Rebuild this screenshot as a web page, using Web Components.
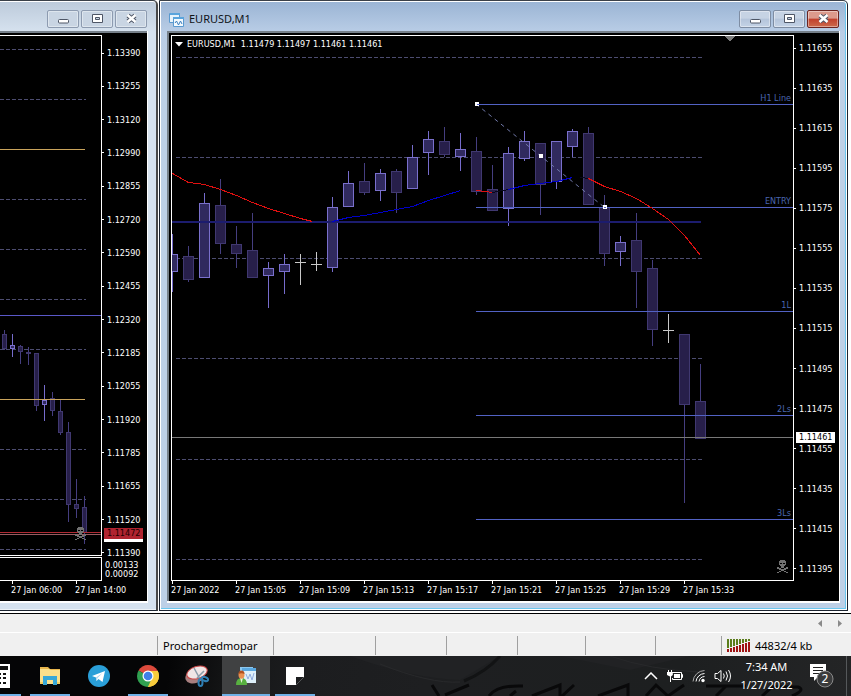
<!DOCTYPE html>
<html lang="en">
<head>
<meta charset="utf-8">
<title>EURUSD,M1</title>
<style>
  html, body { margin: 0; height: 100%; }
  body { background: #f0f0f0; overflow: hidden; font-family: "Noto Sans", "Open Sans", sans-serif; }
</style>
</head>
<body>
<trading-desktop></trading-desktop>

<script>
const CHART_FONT = '9px "DejaVu Sans Condensed", "DejaVu Sans", sans-serif';

function define(name, html, setup) {
  const template = document.createElement('template');
  template.innerHTML = html;
  customElements.define(name, class extends HTMLElement {
    constructor() {
      super();
      this.attachShadow({ mode: 'open' }).append(template.content.cloneNode(true));
    }
    connectedCallback() { if (setup) setup.call(this, this.shadowRoot); }
  });
}

/* Candles: x, high, body top, body bottom, low, kind (u = up, d = down, j = doji) */
const CHARTS = {
  m1: {
    box: [172, 36, 621, 544], half: 5,
    dashes: { from: 176, to: 702, ys: [57, 157, 258, 358, 459, 559] },
    candles: [
      [172,234,254,271,291,'u'],[188,246,256,279,281,'d'],[204,193,203,277,277,'u'],[220,179,205,243,253,'d'],
      [236,226,244,253,267,'d'],[252,213,250,277,277,'d'],[268,262,268,275,307,'u'],[284,254,264,271,293,'u'],
      [300,254,262,262,285,'j'],[316,252,264,264,271,'j'],[332,197,207,267,271,'u'],[348,171,183,206,206,'u'],
      [364,163,181,192,194,'d'],[380,169,173,190,200,'u'],[396,169,171,192,212,'d'],[412,145,157,188,188,'u'],
      [428,131,139,152,174,'u'],[444,127,141,154,156,'d'],[460,133,149,156,170,'u'],[476,137,151,191,194,'d'],
      [492,165,189,210,210,'d'],[508,147,153,208,225,'u'],[524,131,141,158,160,'u'],[540,143,143,184,214,'d'],
      [556,141,141,181,188,'u'],[572,129,131,146,156,'u'],[588,127,133,204,204,'d'],[604,195,207,253,265,'d'],
      [620,236,242,251,265,'u'],[636,213,240,271,307,'d'],[652,260,268,329,345,'d'],[668,314,330,330,343,'j'],
      [684,334,334,404,502,'d'],[700,364,401,438,438,'d']
    ],
    levels: [
      { y: 104, from: 476, to: 793, c: '#5262c4', label: 'H1 Line' },
      { y: 207, from: 476, to: 793, c: '#5262c4', label: 'ENTRY' },
      { y: 311, from: 476, to: 793, c: '#5262c4', label: '1L' },
      { y: 415, from: 476, to: 793, c: '#5262c4', label: '2Ls' },
      { y: 519, from: 476, to: 793, c: '#5262c4', label: '3Ls' },
      { y: 437, from: 172, to: 793, c: '#787878' }
    ],
    bands: [{ y: 221, from: 172, to: 701, c: '#1c1c6e' }],
    paths: [
      ['#e01010', '172,173 188,182 204,184 220,189 236,195 252,202 268,208 284,213 300,218 312,221'],
      ['#0000c8', '332,221 348,217 364,215 380,212 396,209 412,206 428,200 444,195 460,190'],
      ['#e01010', '476,190 484,191 492,192'],
      ['#08081c', '492,192 508,189'],
      ['#0000c8', '508,189 524,185 540,183 556,181 572,177'],
      ['#08081c', '580,177 588,178'],
      ['#e01010', '588,178 604,186 620,191 636,198 652,208 668,219 684,235 700,255']
    ],
    trend: [476, 104, 604, 207],
    skull: [777, 560], shift: true
  },
  h1: {
    box: [0, 36, 101, 519], half: 2,
    dashes: { from: 0, to: 86, ys: [49, 99, 199, 249, 299, 349, 449, 499, 549] },
    candles: [
      [4,330,334,348,349,'d'],[12,334,345,348,356,'u'],[20,345,346,351,363,'d'],[28,347,352,353,364,'d'],
      [36,353,353,405,410,'d'],[44,385,400,404,420,'u'],[52,392,398,410,415,'d'],[60,399,411,432,434,'d'],
      [68,422,432,504,521,'d'],[76,479,504,508,517,'d'],[84,496,507,532,543,'d']
    ],
    levels: [
      { y: 149, from: 0, to: 85, c: '#c9a45c' },
      { y: 399, from: 0, to: 85, c: '#c9a45c' },
      { y: 315, from: 0, to: 101, c: '#5a58c8' },
      { y: 532, from: 0, to: 101, c: '#b02a34' },
      { y: 534, from: 0, to: 101, c: '#9a5a60' }
    ],
    bands: [], paths: [], skull: [75, 527]
  }
};

const SKULL = `<g fill="#727272"><path d="M3 0h5v1h1v4H8v1H7v2H4V6H3V5H2V1h1z"/><path fill="#000" d="M3 3h2v1H3zM6 3h2v1H6z"/>
  <path d="M0 7h2v1h2v1h3V8h2V7h2v2H9v1H7v1h2v1h2v1H9v-1H7v-1H4v1H2v1H0v-1h2v-1h2v-1H2V9H0z"/></g>`;

define('candle-chart', `
  <style>
    :host { display: block; position: relative; overflow: hidden; background: #000; font: ${CHART_FONT}; }
    svg { display: block; position: absolute; inset: 0; width: 100%; height: 100%; }
    .level { position: absolute; right: 2px; line-height: 11px; margin-top: -11px; color: #4a66ae; }
    ::slotted(*) { position: absolute; top: 2px; left: 3px; }
  </style>
  <div id="art"></div><div id="labels"></div><slot></slot>`,
  function (root) {
    const d = CHARTS[this.getAttribute('series')];
    const [bx, by, bw, bh] = d.box;
    const rect = (x, y, w, h, c) => `<rect x="${x}" y="${y}" width="${w}" height="${h}" fill="${c}"/>`;
    let s = '';
    for (const y of d.dashes.ys)
      s += `<path d="M${d.dashes.from} ${y}.5H${d.dashes.to}" stroke="#4c4c70" stroke-dasharray="4 2"/>`;
    for (const [x, hi, top, bottom, lo, kind] of d.candles) {
      if (kind === 'j') {
        s += rect(x, hi, 1, lo - hi, '#c8c8c8') + rect(x - d.half, top, d.half * 2 + 1, 1, '#c8c8c8');
        continue;
      }
      const edge = kind === 'u' ? '#7a70cc' : '#403870';
      const fill = kind === 'u' ? '#302a5e' : '#271f4a';
      s += rect(x, hi, 1, lo - hi + 1, kind === 'u' ? '#766ccc' : '#453e80');
      s += rect(x - d.half, top, d.half * 2 + 1, bottom - top + 1, edge);
      if (bottom - top > 1) s += rect(x - d.half + 1, top + 1, d.half * 2 - 1, bottom - top - 1, fill);
    }
    for (const b of d.bands) s += rect(b.from, b.y, b.to - b.from, 2, b.c);
    for (const l of d.levels) s += rect(l.from, l.y, l.to - l.from, 1, l.c);
    for (const [c, pts] of d.paths)
      s += `<polyline points="${pts}" fill="none" stroke="${c}" transform="translate(.5 .5)"/>`;
    if (d.trend) {
      const [x1, y1, x2, y2] = d.trend;
      s += `<path d="M${x1} ${y1}L${x2} ${y2}" stroke="#7078a8" stroke-dasharray="4 4" shape-rendering="auto"/>`;
      for (const t of [0, .5, 1])
        s += rect(Math.round(x1 + (x2 - x1) * t) - 1, Math.round(y1 + (y2 - y1) * t) - 2, 4, 4, '#fff');
      s += rect(x1 + 1, y1, 2, 1, '#5262c4') + rect(x2, y2, 2, 1, '#5262c4');
    }
    if (d.shift) s += '<path d="M724 36h11l-5 5z" fill="#7c7c7c"/>';
    s += `<g transform="translate(${d.skull})">${SKULL}</g>`;
    root.getElementById('art').innerHTML =
      `<svg viewBox="${d.box.join(' ')}" preserveAspectRatio="none" shape-rendering="crispEdges" aria-hidden="true">${s}</svg>`;
    root.getElementById('labels').innerHTML = d.levels.filter(l => l.label).map(l =>
      `<span class="level" style="top:${(l.y - by) / bh * 100}%">${l.label}</span>`).join('');
  });

define('price-axis', `
  <style>
    :host { display: flex; flex-direction: column; position: relative; box-sizing: border-box; color: #fff; font: ${CHART_FONT};
            padding: 7px 0 6px; }
    ol { list-style: none; margin: 0; padding: 0; flex: 1; display: flex; flex-direction: column; justify-content: space-between; }
    li { line-height: 12px; display: flex; align-items: center; gap: 3px; white-space: nowrap; }
    li::before { content: ""; width: 2px; height: 1px; background: #fff; }
  </style>
  <ol></ol><slot></slot>`,
  function (root) {
    root.querySelector('ol').innerHTML = this.getAttribute('values').split(' ').map(v => `<li>${v}</li>`).join('');
  });

define('price-tag', `
  <style>
    :host { position: absolute; left: 2px; width: 39px; height: 11px; box-sizing: border-box; padding-left: 3px;
            background: var(--tag, #fff); color: var(--ink, #000); font: ${CHART_FONT}; line-height: 11px; }
  </style><slot></slot>`);

define('time-axis', `
  <style>
    :host { display: block; overflow: hidden; color: #fff; font: ${CHART_FONT}; }
    ol { list-style: none; margin: 0; padding: 0; display: flex; }
    li { flex: none; width: 64px; line-height: 12px; white-space: nowrap; }
    li::before { content: ""; display: block; width: 1px; height: 3px; margin-left: 1px; background: #fff; }
  </style><ol></ol>`,
  function (root) {
    root.querySelector('ol').innerHTML = this.getAttribute('values').split('|').map(v => `<li>${v}</li>`).join('');
  });

define('caption-button', `
  <style>
    :host { display: block; }
    button { display: grid; place-items: center; width: 32px; height: 18px; padding: 0; border: 1px solid #7e8da3; border-radius: 2px;
             background: linear-gradient(#c6d3e4 0 45%, #b4c4da 50%, #c4d3e6); box-shadow: inset 0 0 0 1px #ffffff66; }
    :host([tone="quiet"]) button { background: #c9d5e3; border-color: #8d9bb0; }
    :host([tone="danger"]) button { border-color: #6b2420; background: linear-gradient(#dc9a8c 0 45%, #c1402c 50%, #cc6a4c); }
    svg { display: block; }
  </style>
  <button type="button"></button>`,
  function (root) {
    const art = {
      minimize: '<rect x="2.5" y="7.5" width="10" height="3.5" rx="1" fill="#fff" stroke="#4e5666"/>',
      restore: '<path fill="#fff" fill-rule="evenodd" stroke="#4e5666" d="M2.500 2.500h10v8h-10zM5.500 5.500h4v2h-4z"/>',
      close: '<path fill="none" stroke="#4e5666" stroke-width="4.500" d="M4 3.500l7 6M11 3.500l-7 6"/><path fill="none" stroke="#fff" stroke-width="2.500" d="M3.500 3l8 7M11.500 3l-8 7"/>'
    };
    const kind = this.getAttribute('kind'), b = root.querySelector('button');
    b.setAttribute('aria-label', kind);
    b.innerHTML = `<svg width="15" height="14" viewBox="0 0 15 14" aria-hidden="true">${art[kind]}</svg>`;
  });

define('chart-window', `
  <style>
    :host { display: grid; grid-template-rows: 29px minmax(0, 1fr); box-sizing: border-box; min-width: 0;
            border: 1px solid #1c2430; border-top-color: #3a4048; box-shadow: inset 0 0 0 1px #fff, inset -1px -1px 0 1px #6cc8f0;
            padding: 1px 8px 7px;
            background: linear-gradient(#9ab4d4, #b9cde6 31px, #bdd0e7 60px); border-radius: 0 5px 0 0; }
    :host([inactive]) { border-left: 0; border-right: 2px solid #484848; padding-left: 0; box-shadow: inset 0 1px 0 #fff, inset 0 -1px 0 #eef3f8;
            background: linear-gradient(#bccada, #d6e2ef 31px); }
    header { display: flex; align-items: center; gap: 5px; padding: 5px 0 0 1px; }
    :host([inactive]) header { padding-right: 1px; }
    h2 { margin: 0; flex: 1; min-width: 0; font: 11px/18px "Noto Sans", "Open Sans", sans-serif; color: #101418; }
    nav { display: flex; gap: 2px; }
    .client { min-height: 0; box-sizing: border-box; background: #000; border: solid #fff; border-width: 0 1px 2px 0;
              box-shadow: inset 0 2px 0 #76808a, inset 2px 0 0 #76808a; padding: 4px 0 0 4px; margin: 0 -1px;
              display: grid; grid-template: minmax(0, 1fr) 20px / minmax(0, 1fr) 45px; }
    :host([inactive]) .client { padding-left: 0; margin: 0; box-shadow: inset 0 2px 0 #76808a; }
    ::slotted(time-axis) { grid-column: 1 / -1; }
  </style>
  <header><slot name="icon"></slot><h2><slot name="title"></slot></h2><nav id="nav"></nav></header>
  <section class="client"><slot></slot></section>`,
  function (root) {
    const quiet = this.hasAttribute('inactive');
    root.getElementById('nav').innerHTML = ['minimize', 'restore', 'close'].map(k =>
      `<caption-button kind="${k}" tone="${quiet ? 'quiet' : k === 'close' ? 'danger' : 'normal'}"></caption-button>`).join('');
  });

define('traffic-meter', `
  <style>:host { display: flex; align-items: center; gap: 4px; } svg { flex: none; }</style>
  <svg width="24" height="13" viewBox="0 0 24 13" shape-rendering="crispEdges" aria-hidden="true"></svg><slot></slot>`,
  function (root) {
    let s = '';
    for (let i = 0; i < 8; i++) {
      const h = 9 - i;
      s += `<path fill="#5b7d1c" d="M${i * 3} 0h2v${h}h-2z"/><path fill="#a01414" d="M${i * 3} ${h + 1}h2V13h-2z"/>`;
    }
    root.querySelector('svg').innerHTML = s;
  });

define('status-bar', `
  <style>
    :host { display: block; background: #f0f0f0; color: #000; font: 11px/18px "Noto Sans", "Open Sans", sans-serif; }
    .tabs { display: flex; justify-content: flex-end; align-items: center; gap: 14px; height: 18px; padding: 0 9px 0 0; border-bottom: 1px solid #fff; }
    .tabs button { display: block; border: 0; padding: 0; background: none; height: 7px; }
    svg { display: block; }
    .cells { display: grid; grid-template-columns: minmax(0, 1fr) 116px 102px 71px 71px 68px 70px 66px 130px; height: 23px; box-sizing: border-box; padding: 3px 0 1px; }
    .cells > div { display: flex; align-items: center; padding-left: 5px; border-left: 1px solid #a0a0a0; }
    .cells > div:first-child { border: 0; }
  </style>
  <div class="tabs">
    <button type="button" aria-label="Previous tab"><svg width="5" height="7" viewBox="0 0 5 7"><path fill="#8a8a8a" d="M4 0v7L0 3.500z"/></svg></button>
    <button type="button" aria-label="Next tab"><svg width="5" height="7" viewBox="0 0 5 7"><path fill="#8a8a8a" d="M1 0v7l4-3.500z"/></svg></button>
  </div>
  <div class="cells">
    <div></div><div>Prochargedmopar</div><div></div><div></div><div></div><div></div><div></div><div></div>
    <div><traffic-meter>44832/4 kb</traffic-meter></div>
  </div>`);

define('task-button', `
  <style>
    :host { display: block; flex: none; width: 48px; }
    button { position: relative; display: grid; place-items: center; width: 100%; height: 100%; padding: 0; border: 0; background: none; }
    :host([state="active"]) button { background: #404142; }
    :host([state]) button::after { content: ""; position: absolute; left: 4px; right: 4px; bottom: 0; height: 2px; background: #6fb0e6; }
    :host([state="active"]) button::after { left: 0; right: 0; }
  </style>
  <button type="button"><slot></slot></button>`,
  function (root) { root.querySelector('button').setAttribute('aria-label', this.getAttribute('name')); });

define('system-tray', `
  <style>
    :host { display: flex; align-items: stretch; color: #fff; font: 11px/18px "Noto Sans", "Open Sans", sans-serif; }
    button { display: grid; place-items: center; padding: 0; border: 0; background: none; color: inherit; font: inherit; width: 24px; }
    .clock { width: 63px; align-content: center; }
    .note { width: 48px; }
    .edge { width: 1px; margin-right: 4px; background: #55585a; }
    .badge { font: 12px "Noto Sans", sans-serif; }
  </style>
  <button type="button" aria-label="Show hidden icons"><svg width="14" height="8" viewBox="0 0 14 8"><path fill="none" stroke="#fff" stroke-width="1.500" d="M1 7l6-6 6 6"/></svg></button>
  <button type="button" aria-label="Battery"><svg width="18" height="12" viewBox="0 0 18 12"><path fill="none" stroke="#fff" d="M6 2.500h9.500v7H6.500V8M15.500 4.500h1v3h-1"/><path fill="#fff" d="M8 4h6v4H8zM2 0h1v2h2V0h1v2h.8v3L5 6.500V12H4V6.500L1 5V2h1z"/></svg></button>
  <button type="button" aria-label="Wi-Fi"><svg width="14" height="14" viewBox="0 0 14 14"><g fill="none" stroke="#fff"><path d="M1 12.500A12 12 0 0 1 12.500 1.500" stroke="#aaa"/><path d="M4 12.500A9 9 0 0 1 12.500 4.500"/><path d="M7 12.500A6 6 0 0 1 12.500 7.500"/></g><circle cx="11" cy="11.500" r="1.700" fill="#fff"/></svg></button>
  <button type="button" aria-label="Volume"><svg width="18" height="14" viewBox="0 0 18 14"><g fill="none" stroke="#fff"><path d="M1 4.500h2.500L7 1.500v11L3.500 9.500H1z"/><path d="M9.500 4.500q1.500 2.500 0 5M12 2.500q3 4.500 0 9M14.500 1q4 6 0 12"/></g></svg></button>
  <button type="button" class="clock"><time>7:34 AM</time><time>1/27/2022</time></button>
  <button type="button" class="note" aria-label="2 notifications"><svg width="26" height="26" viewBox="0 0 26 26"><path fill="#fff" d="M1 1h16v13H9l-4 4v-4H1z"/><path stroke="#222" d="M4 4.500h10M4 7.500h10M4 10.500h7"/><circle cx="16" cy="16" r="8" fill="#3a3b3c" stroke="#8a8a8a"/><text class="badge" x="16" y="20" text-anchor="middle" fill="#fff">2</text></svg></button>
  <span class="edge"></span>`);

define('task-bar', `
  <style>
    :host { display: flex; position: relative; overflow: hidden; height: 40px;
            background: linear-gradient(100deg, #050506 0 20%, #141516 27%, #1c1d1f 36%, #1e1f21 50%, #1d1f20 80%, #242526); }
    .apps { display: flex; gap: 1px; margin-left: -23px; flex: 1; position: relative; }
    .wall { position: absolute; inset: 0; width: 100%; height: 100%; }
    system-tray { position: relative; }
    svg { display: block; }
  </style>
  <svg class="wall" viewBox="0 0 851 40" preserveAspectRatio="xMaxYMid slice" aria-hidden="true">
    <path d="M350 0q60 22 110 24l40-24zM560 0l70 14 60-14z" fill="#212224"/>
    <path d="M380 8q50 20 80 18M610 0q40 14 90 16" stroke="#28292b" fill="none"/>
    <path d="M500 0q-14 16-36 25" stroke="#121314" stroke-width="3" fill="none"/>
    <path d="M432 29l7 11M445 39l24-10M489 40q8-11 34-10M516 35l-6 5M532 40l28-11 0 11M574 29l-12 11M598 40l30-11 0 11M646 40l10-11 12 11 16-11M706 30h40M726 30l-10 10M762 40l10-9h26q8 3-6 9" stroke="#09090a" stroke-width="3" fill="none"/>
  </svg>
  <div class="apps">
    <task-button name="Calculator" state="open"><svg width="20" height="24" viewBox="0 0 20 24"><path fill="#fff" d="M0 0h19v24H0z"/><path fill="#111" d="M2 2h15v4H2zM2 9h3v2H2zM7 9h3v2H7zM12 9h3v2h-3zM2 13h3v2H2zM7 13h3v2H7zM12 13h3v2h-3zM2 18h3v2H2zM7 18h3v2H7zM12 18h3v2h-3z"/></svg></task-button>
    <task-button name="File Explorer" state="open"><svg width="22" height="20" viewBox="0 0 22 20"><path fill="#e8b64c" d="M1 1h8l2 2h10v3H1z"/><path fill="#fbe08c" d="M1 3h9l2 1h9v14H1z"/><path fill="#38a8d8" d="M4 10h14v9h-4v-5H8v5H4z"/><path fill="#f3cd60" d="M1 16h3v2H1zM18 16h3v2h-3z"/></svg></task-button>
    <task-button name="Telegram"><svg width="22" height="22" viewBox="0 0 22 22"><circle cx="11" cy="11" r="11" fill="#2a9fd8"/><path fill="#fff" d="M4 11l13-5-2.500 11-4-3-2 2-.5-3.500z"/><path fill="#a9d4ee" d="M8 12.500l6.500-4.500-5 5-1 3z"/></svg></task-button>
    <task-button name="Chrome" state="open"><svg width="22" height="22" viewBox="0 0 22 22"><path fill="#dc4a3c" d="M11 11L1.500 5.500A11 11 0 0 1 20.500 5.500z"/><path fill="#f8cc3c" d="M11 11L20.500 5.500A11 11 0 0 1 11 22z"/><path fill="#30a050" d="M11 11l3 4-3 7A11 11 0 0 1 1.500 5.500z"/><path fill="#dc4a3c" d="M11 6h9.700L18 4z"/><path fill="#f8cc3c" d="M11 6h9.800a11 11 0 0 1-9.800 16l5-8z"/><circle cx="11" cy="11" r="5.500" fill="#fff"/><circle cx="11" cy="11" r="4.300" fill="#4080e8"/></svg></task-button>
    <task-button name="Snipping Tool"><svg width="24" height="22" viewBox="0 0 24 22"><ellipse cx="10" cy="11" rx="10" ry="7" fill="#a88080" transform="rotate(-22 10 11)"/><ellipse cx="12" cy="7.500" rx="10.500" ry="6" fill="#f0e6e6" stroke="#cc4848" transform="rotate(-18 12 7.500)"/><path d="M9 3l6 11M19 6l-7 7" stroke="#8a9aa8" stroke-width="1.500"/><g fill="none" stroke="#2f7fb4" stroke-width="2"><ellipse cx="15.500" cy="17.500" rx="2" ry="3.500"/><ellipse cx="20" cy="14" rx="3.200" ry="1.800" transform="rotate(20 20 14)"/></g></svg></task-button>
    <task-button name="MetaTrader 4" state="active"><svg width="20" height="20" viewBox="0 0 20 20"><path fill="#8cc8f0" d="M4 1h13v12H4z"/><path fill="#c4e4f8" d="M5 4h11v8H5z"/><path fill="#5aa8e0" d="M6 2h14v3H6z"/><path fill="#dff0fa" d="M8 5h12v12H8z"/><path fill="none" stroke="#90acdf" d="M10 8l2 5 2-5 2 6 2-7"/><path fill="#58b040" d="M0 19q0-7 5.500-7t5.500 7z"/><path fill="#e8f4d8" d="M4 12h3l-1.500 5z"/><ellipse cx="5.500" cy="9" rx="3" ry="3.700" fill="#e89050"/><path fill="#b05020" d="M2.500 8q0-3.500 3-3.500t3 3.500q-3-1.500-6 0z"/></svg></task-button>
    <task-button name="Sticky Notes" state="open"><svg width="18" height="18" viewBox="0 0 18 18"><path fill="#fff" d="M0 0h18v10l-8 8H0z"/><path fill="#1b1c1e" d="M18 10l-8 8v-8z"/><path fill="#fff" d="M18 9v1h-8v8H9V9z"/></svg></task-button>
  </div>
  <system-tray></system-tray>`);

define('trading-desktop', `
  <style>
    :host { display: grid; grid-template-rows: minmax(0, 1fr) auto auto; height: 100vh; }
    main { display: grid; grid-template-columns: 158px minmax(0, 1fr); gap: 1px; min-height: 0; padding: 0 3px 2px 0;
           background: #fff; border-bottom: 1px solid #000; }
    .plot { border: 1px solid #fff; }
    .split { display: grid; grid-template-rows: minmax(0, 1fr) 24px; gap: 1px; background: #000; }
    .split > * { border: solid #fff; border-width: 1px 1px 1px 0; }
    .stack { display: grid; grid-template-rows: minmax(0, 1fr) 22px; color: #fff; font: ${CHART_FONT}; line-height: 9px; }
    .stack p { margin: 0; padding: 2px 0 0 3px; }
    .stack price-axis { padding: 12px 0 0; }
    .quote { display: flex; align-items: center; gap: 4px; color: #fff; line-height: 12px; white-space: pre; }
    .under { height: 14px; }
    svg { display: block; }
  </style>
  <main>
    <chart-window inactive>
      <div class="split"><candle-chart series="h1"></candle-chart><div></div></div>
      <div class="stack">
        <price-axis values="1.13390 1.13255 1.13120 1.12990 1.12855 1.12720 1.12590 1.12455 1.12320 1.12185 1.12055 1.11920 1.11785 1.11655 1.11520 1.11390">
          <price-tag class="under" style="top:94%"></price-tag>
          <price-tag style="top:94%;--tag:#b02430;--ink:#200">1.11472</price-tag>
        </price-axis>
        <p>0.00133<br>0.00092</p>
      </div>
      <time-axis style="padding-left:11px" values="27 Jan 06:00|27 Jan 14:00"></time-axis>
    </chart-window>
    <chart-window>
      <svg slot="icon" width="15" height="15" viewBox="0 0 15 15" aria-hidden="true"><path fill="#e8f3fb" stroke="#5a9ad0" d="M.5 1.500h10v9H.5z"/><path fill="#5aa4dc" d="M1 1h10v2H1z"/><path fill="#f4fafe" stroke="#5a9ad0" d="M4.500 5.500h10v9h-10z"/><path fill="#5aa4dc" d="M4 5h11v2H4z"/><path fill="none" stroke="#3c80c0" d="M6 11l1.500-2 2 4 2-4 1.500 3"/></svg>
      <span slot="title">EURUSD,M1</span>
      <candle-chart series="m1" class="plot">
        <div class="quote"><svg width="8" height="5" viewBox="0 0 8 5"><path fill="#fff" d="M0 0h8L4 4.500z"/></svg>EURUSD,M1  1.11479 1.11497 1.11461 1.11461</div>
      </candle-chart>
      <price-axis values="1.11655 1.11635 1.11615 1.11595 1.11575 1.11555 1.11535 1.11515 1.11495 1.11475 1.11455 1.11435 1.11415 1.11395">
        <price-tag style="top:72.7%">1.11461</price-tag>
      </price-axis>
      <time-axis values="27 Jan 2022|27 Jan 15:05|27 Jan 15:09|27 Jan 15:13|27 Jan 15:17|27 Jan 15:21|27 Jan 15:25|27 Jan 15:29|27 Jan 15:33"></time-axis>
    </chart-window>
  </main>
  <status-bar></status-bar>
  <task-bar></task-bar>`);
</script>
</body>
</html>
